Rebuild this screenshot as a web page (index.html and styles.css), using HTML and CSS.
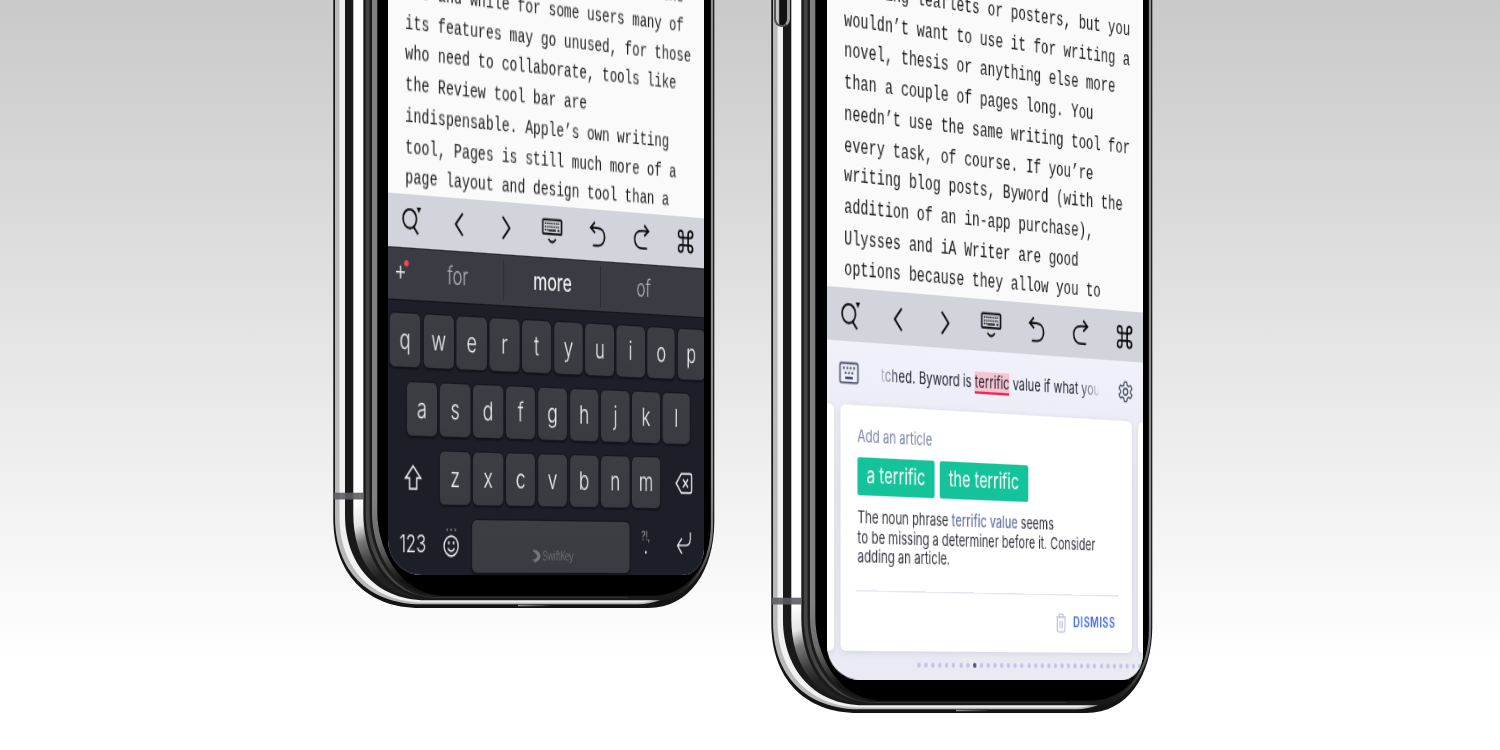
FILE: index.html
```html
<!DOCTYPE html>
<html lang="en">
<head>
<meta charset="utf-8">
<title>Writing keyboards</title>
<link rel="stylesheet" href="styles.css">
</head>
<body>
<svg class="defs" width="0" height="0" aria-hidden="true">
  <defs>
    <linearGradient id="band" gradientUnits="userSpaceOnUse" x1="30" y1="500" x2="62" y2="572">
      <stop offset="0" stop-color="#fff"/><stop offset=".3" stop-color="#e4e4e4"/><stop offset=".5" stop-color="#777"/><stop offset=".8" stop-color="#3a3a3a"/><stop offset="1" stop-color="#222"/>
    </linearGradient>
    <linearGradient id="inner" gradientUnits="userSpaceOnUse" x1="44" y1="500" x2="75" y2="580">
      <stop offset="0" stop-color="#808080"/><stop offset=".5" stop-color="#6a6a6a"/><stop offset="1" stop-color="#141414"/>
    </linearGradient>
    <linearGradient id="rim" gradientUnits="userSpaceOnUse" x1="0" y1="480" x2="0" y2="600">
      <stop offset="0" stop-color="#8c8c8c"/><stop offset=".5" stop-color="#777"/><stop offset=".85" stop-color="#333"/><stop offset="1" stop-color="#222" stop-opacity="0"/>
    </linearGradient>
    <linearGradient id="glint" x1="0" x2="1" y1="0" y2="0">
      <stop offset="0" stop-color="#999"/><stop offset="1" stop-color="#222"/>
    </linearGradient>
    <symbol id="frame" viewBox="0 -120 390 740">
      <path fill="#141414" d="M5.3-120V518C5.3 573 38 608 92 608H320C362 608 386 570 386.3 522V-120Z"/>
      <path fill="#b9b9b9" d="M7-120V517C7 570 39 604.3 94 604.3H310C342 604.300 374 578 384 530V-120Z"/>
      <path fill="#f1f1f1" d="M11.500-120V517C11.500 566 42 602.500 96 602.500H310C340 602.500 373 577 384 530V-120Z"/>
      <path fill="#191919" d="M17-120V515C17 562 46 600.300 98 600.300H330C362 600.300 382 570 384 530V-120Z"/>
      <path fill="url(#band)" d="M25.300-120V514C25.300 560 50 597 98 598.500H300V-120Z"/>
      <path fill="#1a1a1a" d="M35.300-120V513C35.300 556 58 598.500 102 598.500H330C362 598 382 570 384 530V-120Z"/>
      <path fill="#444" d="M37.700-120V512C37.700 555 60 595 104 597.500H300V-120Z"/>
      <path fill="#1c1c1c" d="M41.500-120V512C41.500 554 64 595 104 597H300V-120Z"/>
      <path fill="url(#inner)" d="M44-120V512C44 552 66 592 106 595.500H300V-120Z"/>
      <path fill="#000" d="M49.300-120V512C49.300 548 70 592 112 595.700H325C358 595.700 382.700 566 382.700 526V-120Z"/>
      <path fill="none" stroke="url(#rim)" stroke-width="2.200" d="M384-120V524C384 562 366 590 336 600"/>
      <path fill="#5c5c60" fill-opacity=".9" d="M5.600 492.700H35.300V499.500H5.600Z"/>
      <path fill="url(#glint)" d="M190 604.800H222V606.200H190Z"/>
    </symbol>
    <symbol id="i-search" viewBox="0 0 24 24"><circle cx="10.500" cy="10.500" r="7.600"/><path d="M14.500 16.500 20 22.500"/><path class="solid" d="M18.300 1h5.200l-2.600 4.600z"/></symbol>
    <symbol id="i-back" viewBox="0 0 24 24"><path d="M16.500 3 8.300 12l8.200 9"/></symbol>
    <symbol id="i-next" viewBox="0 0 24 24"><path d="M8.500 3 16.700 12l-8.200 9"/></symbol>
    <symbol id="i-board" viewBox="0 0 28 24"><rect x="2.500" y="2" width="23" height="12" rx="1"/><path stroke-width="1.300" stroke-dasharray="1.400 .9" d="M5 5.200H23.300M5 7.900H23.300M5 10.600H9"/><path stroke-width="1.400" d="M9.500 11H18.500M20.500 11H23"/><path d="M9.500 18.200Q14 23.500 18.500 18.200"/></symbol>
    <symbol id="i-undo" viewBox="0 0 24 24"><path d="M9 1.500 3.800 6.300 9.300 10.500M4 6.200H12C18 6.200 21 9.500 21 13.500S18 21 13 21H6.500"/></symbol>
    <symbol id="i-redo" viewBox="0 0 24 24"><path d="M15.500 1 20.800 5.800 15.500 10M20.600 5.700H12.500C6.500 5.700 3.500 9 3.500 13S6.500 20.500 11.500 20.500H19"/></symbol>
    <symbol id="i-cmd" viewBox="0 0 24 24"><path d="M8.700 5.900A2.900 2.900 0 1 0 5.800 8.800H18.200A2.900 2.900 0 1 0 15.300 5.900V18.100A2.900 2.900 0 1 0 18.200 15.200H5.800A2.900 2.900 0 1 0 8.700 18.100Z"/></symbol>
    <symbol id="i-shift" viewBox="0 0 24 24"><path d="M12 3 3.500 12.500H8V21H16V12.500H20.500Z"/></symbol>
    <symbol id="i-del" viewBox="0 0 24 24"><path d="M8.500 4H19.500Q21.500 4 21.500 6V18Q21.500 20 19.500 20H8.500L2 12ZM10.500 8.500 17 15.500M17 8.500 10.500 15.500"/></symbol>
    <symbol id="i-enter" viewBox="0 0 24 24"><path d="M21.500 1V6.500C21.500 10.500 19 13 15 13H4M10 6.500 4 13 10 20.500"/></symbol>
    <symbol id="i-smile" viewBox="0 0 24 30"><circle cx="12" cy="18.500" r="9.600"/><path stroke-width="1.800" d="M7.500 20.500Q12 26.500 16.500 20.500"/><path stroke-width="2.200" d="M8.800 14.200V16.700M15.200 14.200V16.700"/><path class="solid faint" d="M5.500 2h2v1.800h-2zM11 2h2v1.800h-2zM16.500 2h2v1.800h-2z"/></symbol>
    <symbol id="i-mark" viewBox="0 0 24 24"><path class="solid" d="M5 1C15 1 22 5 23 12 22 19 15 23 5 23L8 20.500 1 19 9 17.500 16 12 9 6 3 3Z"/></symbol>
    <symbol id="i-keys" viewBox="0 0 24 19"><rect x="1.500" y="1.500" width="21" height="16" rx="1.500"/><path stroke-width="2" d="M5 5.500h2M9 5.500h2M13 5.500h2M17 5.500h2M7 9.500h2M11 9.500h2M15 9.500h2M7.500 13.500h9"/></symbol>
    <symbol id="i-gear" viewBox="0 0 24 24"><circle cx="12" cy="12" r="3.500"/><path d="M10 1.800H14L14.700 5 17 6.300 20.200 5.300 22.200 8.700 19.800 11V13L22.200 15.300 20.200 18.700 17 17.700 14.700 19 14 22.200H10L9.300 19 7 17.700 3.800 18.700 1.800 15.300 4.200 13V11L1.800 8.700 3.800 5.300 7 6.300 9.300 5Z"/></symbol>
    <symbol id="i-bin" viewBox="0 0 16 20"><path stroke-width="1.400" d="M1 4.500H15M5 4.500V3Q5 1.500 6.500 1.500H9.500Q11 1.500 11 3V4.500M2.500 6V17Q2.500 18.800 4.300 18.800H11.700Q13.500 18.800 13.500 17V6M6.500 8V15.500M9.500 8V15.500"/></symbol>
  </defs>
</svg>

<main class="stage">
  <section class="phone phone-left">
    <svg class="frame"><use href="#frame"/></svg>
    <div class="screen">
      <div class="document"><pre>                                 the
use and while for some users many of
its features may go unused, for those
who need to collaborate, tools like
the Review tool bar are
indispensable. Apple’s own writing
tool, Pages is still much more of a
page layout and design tool than a</pre></div>
      <div class="tools">
        <svg><use href="#i-search"/></svg><svg><use href="#i-back"/></svg><svg><use href="#i-next"/></svg><svg class="board"><use href="#i-board"/></svg><svg><use href="#i-undo"/></svg><svg><use href="#i-redo"/></svg><svg><use href="#i-cmd"/></svg>
      </div>
      <div class="suggest">
        <span class="plus">+</span>
        <span class="word">for</span>
        <span class="word main">more</span>
        <span class="word last">of</span>
      </div>
      <div class="keyboard">
        <div class="row"><kbd>q</kbd><kbd>w</kbd><kbd>e</kbd><kbd>r</kbd><kbd>t</kbd><kbd>y</kbd><kbd>u</kbd><kbd>i</kbd><kbd>o</kbd><kbd>p</kbd></div>
        <div class="row"><kbd>a</kbd><kbd>s</kbd><kbd>d</kbd><kbd>f</kbd><kbd>g</kbd><kbd>h</kbd><kbd>j</kbd><kbd>k</kbd><kbd>l</kbd></div>
        <div class="row"><span class="fn side"><svg><use href="#i-shift"/></svg></span><kbd>z</kbd><kbd>x</kbd><kbd>c</kbd><kbd>v</kbd><kbd>b</kbd><kbd>n</kbd><kbd>m</kbd><span class="fn side"><svg><use href="#i-del"/></svg></span></div>
        <div class="row bottom"><span class="fn num">123</span><span class="fn smile"><svg><use href="#i-smile"/></svg></span><kbd class="space"><svg><use href="#i-mark"/></svg>SwiftKey</kbd><span class="fn punct"><small>?!,</small><b>.</b></span><span class="fn enter"><svg><use href="#i-enter"/></svg></span></div>
      </div>
    </div>
  </section>

  <section class="phone phone-right">
    <svg class="frame"><use href="#frame"/></svg>
    <i class="button"></i>
    <div class="screen">
      <div class="document"><pre>creating leaflets or posters, but you
wouldn’t want to use it for writing a
novel, thesis or anything else more
than a couple of pages long. You
needn’t use the same writing tool for
every task, of course. If you’re
writing blog posts, Byword (with the
addition of an in-app purchase),
Ulysses and iA Writer are good
options because they allow you to</pre></div>
      <div class="tools">
        <svg><use href="#i-search"/></svg><svg><use href="#i-back"/></svg><svg><use href="#i-next"/></svg><svg class="board"><use href="#i-board"/></svg><svg><use href="#i-undo"/></svg><svg><use href="#i-redo"/></svg><svg><use href="#i-cmd"/></svg>
      </div>
      <div class="checker">
        <div class="context">
          <svg class="keys"><use href="#i-keys"/></svg>
          <p>tched. Byword is <mark>terrific</mark> value if what you</p>
          <svg class="gear"><use href="#i-gear"/></svg>
        </div>
        <div class="cards">
          <div class="card"></div>
          <div class="card current">
            <h2>Add an article</h2>
            <div class="choices"><span>a terrific</span><span>the terrific</span></div>
            <p>The noun phrase <em>terrific value</em> seems<br>to be missing a determiner before it. Consider<br>adding an article.</p>
            <div class="dismiss"><svg><use href="#i-bin"/></svg>DISMISS</div>
          </div>
          <div class="card"></div>
        </div>
        <div class="dots"><i></i><i></i><i></i><i></i><i></i><i></i><i></i><i></i><i class="on"></i><i></i><i></i><i></i><i></i><i></i><i></i><i></i><i></i><i></i><i></i><i></i><i></i><i></i><i></i><i></i><i></i><i></i><i></i><i></i><i></i><i></i><i></i><i></i><i></i><i></i></div>
      </div>
    </div>
  </section>
</main>
</body>
</html>
```
FILE: styles.css
```css
* { box-sizing: border-box; }
body { margin: 0; overflow: hidden; font-family: Inter, Roboto, "Liberation Sans", sans-serif; }
.defs { position: absolute; }
.stage {
  position: relative;
  width: 1500px;
  height: 750px;
  overflow: hidden;
  background: linear-gradient(#cacaca 0, #cecece 60px, #ffffff 660px);
}
svg { fill: none; stroke: currentColor; stroke-width: 1.7; display: block; }
.solid { fill: currentColor; stroke: none; }
.faint { opacity: .55; }

/* Phones sit on a free canvas, each screen is tilted in perspective */
.phone { position: absolute; width: 390px; height: 620px; }
.phone-left { left: 328px; top: 0; }
.phone-right { left: 766.4px; top: 104.5px; }
.frame { position: absolute; left: 0; top: -120px; width: 390px; height: 740px; stroke: none; }
.screen {
  position: absolute;
  left: 60px;
  bottom: 45px;
  width: 375px;
  height: 580px;
  display: flex;
  flex-direction: column;
  overflow: hidden;
  border-radius: 0 0 28px 38px / 0 0 22px 27px;
  transform-origin: 0 100%;
  transform: matrix3d(.902, .0015, 0, .0001886, 0, 1.275, 0, 0, 0, 0, 1, 0, 0, 0, 0, 1);
  background: #fafafa;
}
.phone-right .screen { left: 60.4px; }
.button {
  position: absolute;
  left: 8px;
  top: -120px;
  width: 16px;
  height: 42px;
  border-radius: 0 0 9px 9px;
  border: 2px solid #555;
  border-right: 3px solid #999;
  background: linear-gradient(90deg, #c4c4c4 0 22%, #111 34%);
}

.document {
  flex: 1;
  display: flex;
  flex-direction: column;
  justify-content: flex-end;
  overflow: hidden;
  padding-left: 19px;
}
.document pre {
  margin: 0 0 -.3px;
  font: 15.3px/22.75px "Liberation Mono", monospace;
  color: #1c1c1c;
  transform: scaleY(1.075);
  transform-origin: 0 100%;
}
.phone-right .document pre { margin-bottom: 1.6px; line-height: 22.9px; }

.tools {
  display: grid;
  grid-template-columns: repeat(7, 1fr);
  align-items: center;
  justify-items: center;
  flex: none;
  width: 380px;
  height: 42px;
  margin-left: -1.500px;
  background: #d1d4db;
  color: #0c0c0c;
}
.tools svg { width: 23.5px; height: 23.5px; stroke-width: 1.9; }
.tools .board { width: 27px; height: 24px; }

.suggest {
  flex: none;
  height: 42px;
  padding: 0 14px 0 4px;
  display: flex;
  align-items: center;
  background: #3b3b43;
  border-top: 1px solid #2b2b31;
  border-bottom: 1px solid #14151b;
  color: #b1b1b5;
  font-size: 19px;
  font-weight: 300;
}
.plus { position: relative; width: 22px; padding-right: 2px; text-align: center; font-size: 22px; line-height: 30px; margin-bottom: 7px; color: #eee; }
.plus::after {
  content: "";
  position: absolute;
  right: 3px;
  top: 7px;
  width: 5px;
  height: 5px;
  border-radius: 50%;
  background: #f4494b;
}
.word { width: 105px; height: 34px; line-height: 34px; text-align: center; }
.word.main { width: 116px; color: #fff; font-weight: 400; border: solid #2b2b32; border-width: 0 1px; }

.keyboard {
  flex: none;
  width: 378px;
  height: 216px;
  padding-top: 10px;
  display: flex;
  flex-direction: column;
  gap: 12.5px;
  background: #1c1e28;
  color: #f0f0f2;
}
.row { display: flex; justify-content: center; gap: 3.4px; height: 41.5px; }
kbd {
  flex: none;
  width: 34.4px;
  display: flex;
  align-items: center;
  justify-content: center;
  padding-bottom: 1px;
  border-radius: 5px;
  background: linear-gradient(#3d3d44, #3a3a41);
  box-shadow: 0 0 0 1px #15161d, 0 1px 1px 1px #12131a;
  font: 300 20.5px Inter, Roboto, sans-serif;
}
.fn { display: flex; align-items: center; justify-content: center; }
.side { width: 54px; flex: none; }
.side svg { width: 24px; height: 24px; stroke-width: 1.5; }
.bottom { gap: 0; width: 375px; }
.num { width: 55px; padding-bottom: 2px; font-size: 18.8px; font-weight: 300; letter-spacing: -.2px; }
.smile { width: 33px; margin-right: 8px; margin-left: -1px; }
.smile svg { width: 20px; height: 26px; margin-bottom: 5px; stroke-width: 1.7; }
kbd.space {
  width: 187px;
  gap: 1px;
  align-items: flex-end;
  padding-bottom: 8px;
  font-size: 9.8px;
  letter-spacing: -.3px;
  color: #77777c;
}
.space svg { width: 13px; height: 11px; }
.punct { width: 40px; flex-direction: column; justify-content: flex-start; line-height: 14px; padding-top: 4px; }
.punct small { font-size: 10px; color: #9b9ba0; }
.punct b { font-size: 14px; line-height: 5px; }
.enter { width: 53px; }
.enter svg { width: 22px; height: 22px; stroke-width: 1.5; margin-bottom: 5px; }

.checker {
  flex: none;
  height: 266.7px;
  display: flex;
  flex-direction: column;
  background: linear-gradient(#f0f1fa, #e6e7f0 45%, #e9eaf3);
}
.context {
  height: 50px;
  display: flex;
  align-items: center;
  padding: 0 12px 0 13px;
  color: #4d536f;
}
.context p {
  flex: none;
  width: 258px;
  margin: 0 24px 0 24.500px;
  overflow: hidden;
  white-space: nowrap;
  font-size: 13.3px;
  line-height: 22px;
  color: #23252f;
  -webkit-mask-image: linear-gradient(90deg, rgba(0,0,0,.25), #000 8%, #000 90%, rgba(0,0,0,.2));
  mask-image: linear-gradient(90deg, rgba(0,0,0,.25), #000 8%, #000 90%, rgba(0,0,0,.2));
}
mark { background: #f6c3d0; color: inherit; border-bottom: 2px solid #ec2850; }
.keys { width: 23px; height: 18.200px; flex: none; }
.gear { width: 20px; height: 19px; flex: none; }
.cards { display: flex; gap: 7.3px; margin-left: -338.5px; width: 1060px; height: 193.5px; }
.card { flex: none; width: 346.3px; border-radius: 5px; background: #fff; box-shadow: 0 1px 5px rgba(90,95,130,.16); }
.current { display: flex; flex-direction: column; padding: 16px 17px 0 19px; }
.card h2 { margin: 0; font-size: 13px; line-height: 16px; font-weight: 400; color: #7b82a6; }
.choices { display: flex; gap: 6px; margin-top: 9px; }
.choices span {
  width: 87.5px;
  height: 29.3px;
  line-height: 28px;
  border-radius: 2px;
  text-align: center;
  font-size: 17px;
  color: #fff;
  background: #15c39a;
}
.choices span + span { width: 105px; }
.card p { margin: 10px 0 0; font-size: 13px; line-height: 15.9px; white-space: nowrap; color: #30323d; }
.card em { font-style: normal; font-weight: 500; color: #6d77a6; }
.dismiss {
  display: flex;
  align-items: center;
  justify-content: flex-end;
  gap: 8px;
  margin: 17.5px 0 0 -2px;
  padding-right: 4px;
  height: 46px;
  border-top: 1px solid #e4e6f3;
  font-size: 11.5px;
  font-weight: 600;
  letter-spacing: .7px;
  color: #3f68e6;
}
.dismiss svg { width: 14px; height: 17px; color: #b6bad3; }
.dots { display: flex; gap: 4.1px; padding: 9.500px 0 0 102px; }
.dots i { flex: none; width: 4px; height: 4px; border-radius: 50%; background: #bfc5e2; }
.dots .on { background: #4a4e68; }
```
